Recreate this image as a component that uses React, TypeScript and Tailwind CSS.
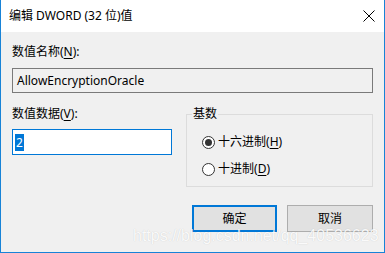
import React from 'react';

function Radio({ checked, label, hotkey }: { checked: boolean; label: string; hotkey: string }) {
  return (
    <div className="flex items-center h-[16px]">
      <span className="w-[13px] h-[13px] rounded-full border border-[#333333] bg-white flex items-center justify-center">
        {checked && <span className="w-[7px] h-[7px] rounded-full bg-[#333333]" />}
      </span>
      <span className="ml-[3px]">
        {label}(<span className="underline underline-offset-2">{hotkey}</span>)
      </span>
    </div>
  );
}

export default function App() {
  return (
    <div className="relative w-[385px] h-[253px] overflow-hidden bg-[#f0f0f0] border-x border-b border-[#1883d7] flex flex-col text-[12px] leading-[16px] text-black font-['Noto_Sans','Noto_Sans_CJK_SC',sans-serif]">
      {/* title bar */}
      <div className="h-[32px] bg-white flex items-center justify-between pl-[8px] pr-[9px]">
        <span>编辑 DWORD (32 位)值</span>
        <svg width="12" height="12" viewBox="0 0 12 12">
          <path d="M0.5 0.5 L11.5 11.5 M11.5 0.5 L0.5 11.5" stroke="#000" strokeWidth="1" fill="none" />
        </svg>
      </div>

      <div className="flex-1 px-[11px] pt-[12px]">
        <div>
          数值名称(<span className="underline underline-offset-2">N</span>):
        </div>
        <div className="mt-[8px] h-[25px] border border-[#7a7a7a] bg-[#f0f0f0] flex items-center pl-[4px]">
          AllowEncryptionOracle
        </div>

        <div className="mt-[13px] flex">
          <div className="w-[160px]">
            <div>
              数值数据(<span className="underline underline-offset-2">V</span>):
            </div>
            <div className="mt-[7px] h-[26px] border border-[#0078d7] bg-white flex items-center pl-[2px]">
              <span className="bg-[#0078d7] text-white px-[1px] h-[17px] leading-[17px]">2</span>
            </div>
          </div>

          <fieldset className="ml-[14px] w-[187px] h-[81px] border border-[#dcdcdc]">
            <legend className="ml-[5px] px-[1px]">基数</legend>
            <div className="pl-[15px] pt-[12px] flex flex-col gap-[11px]">
              <Radio checked label="十六进制" hotkey="H" />
              <Radio checked={false} label="十进制" hotkey="D" />
            </div>
          </fieldset>
        </div>

        <div className="mt-[18px] flex justify-end gap-[10px]">
          <button className="w-[85px] h-[27px] border-2 border-[#0078d7] bg-[#e1e1e1]">确定</button>
          <button className="w-[86px] h-[27px] border border-[#adadad] bg-[#e1e1e1]">取消</button>
        </div>
      </div>

      <div className="absolute left-[132px] top-[226px] text-[16px] leading-[20px] text-white/90 font-['Liberation_Sans',sans-serif] [text-shadow:0_0_1px_rgba(0,0,0,0.2)] whitespace-nowrap">
        https://blog.csdn.net/qq_40536623
      </div>
    </div>
  );
}
